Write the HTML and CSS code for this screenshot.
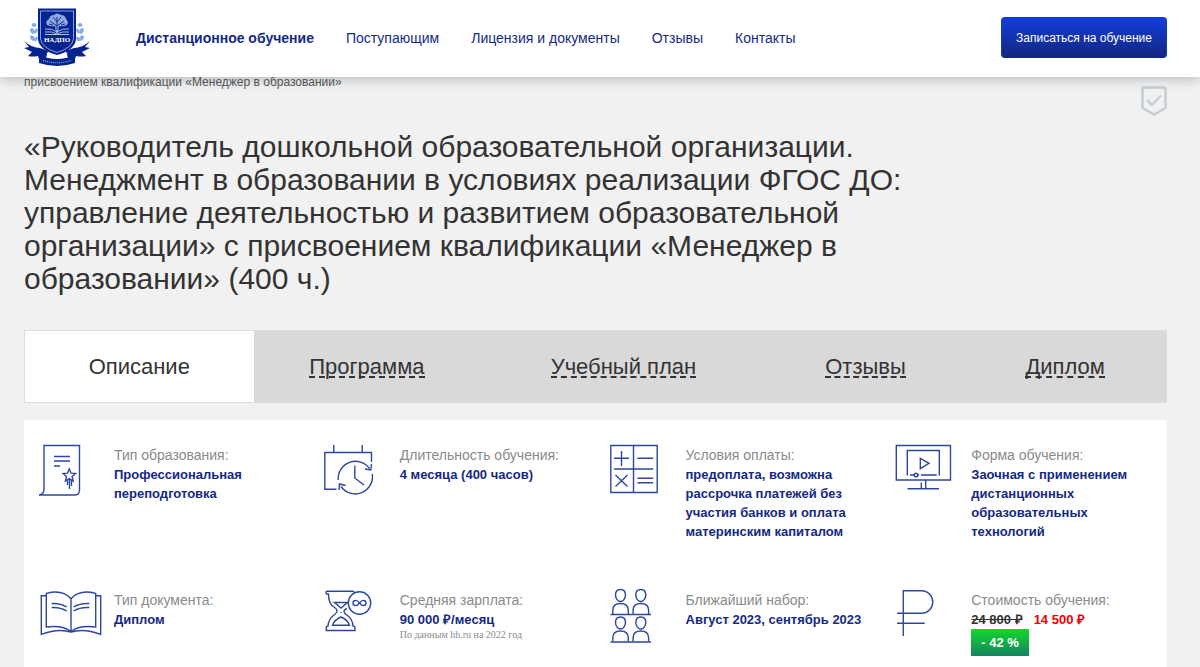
FILE: index.html
```html
<!DOCTYPE html>
<html lang="ru">
<head>
<meta charset="utf-8">
<meta name="viewport" content="width=device-width, initial-scale=1">
<title>НАДПО — Руководитель дошкольной образовательной организации</title>
<link rel="stylesheet" href="styles.css">
</head>
<body>
<header class="header">
  <a class="logo" href="#" aria-label="НАДПО">
    <svg width="68" height="60" viewBox="0 0 68 60">
      <g fill="#7fb0ea">
        <ellipse cx="11" cy="17" rx="2.4" ry="2"/><ellipse cx="9.500" cy="23" rx="2" ry="3" transform="rotate(-30 9.500 23)"/><ellipse cx="13" cy="23" rx="1.500" ry="2.600" transform="rotate(30 13 23)"/><ellipse cx="9.500" cy="30" rx="2" ry="3" transform="rotate(-35 9.500 30)"/><ellipse cx="13" cy="31" rx="1.500" ry="2.600" transform="rotate(30 13 31)"/>
        <ellipse cx="57" cy="17" rx="2.4" ry="2"/><ellipse cx="58.500" cy="23" rx="2" ry="3" transform="rotate(30 58.500 23)"/><ellipse cx="55" cy="23" rx="1.500" ry="2.600" transform="rotate(-30 55 23)"/><ellipse cx="58.500" cy="30" rx="2" ry="3" transform="rotate(35 58.500 30)"/><ellipse cx="55" cy="31" rx="1.500" ry="2.600" transform="rotate(-30 55 31)"/>
      </g>
      <path fill="#06248f" d="M1 33Q9 40 17 40L25 43L23 50L16 51L15 48Q9 49 5 48L9 44L1 40L6 39ZM67 33Q59 40 51 40L43 43L45 50L52 51L53 48Q59 49 63 48L59 44L67 40L62 39Z"/>
      <path fill="#06248f" d="M15 .5H53V31Q52 42 34 47Q16 42 15 31Z"/>
      <path fill="none" stroke="#a9bce8" stroke-width=".8" d="M17.500 3H50.500V31Q49 40 34 44.500Q19 40 17.500 31Z"/>
      <path fill="#8fa8e0" d="M24 17Q22 13 26 11Q27 7 31 7Q34 4 38 7Q42 7 43 11Q46 14 44 17Q40 19 36 18L35 25H33L32 18Q28 19 24 17Z"/>
      <path fill="none" stroke="#06248f" stroke-width=".9" d="M34 22V9M34 18L27 13M34 18L41 13M34 14L30 9M34 14L38 9M26 16L30 17M42 16L38 17"/>
      <path fill="none" stroke="#a9bce8" stroke-width="1" d="M22 21Q29 20 34 24Q39 20 46 21M22 24Q29 23 34 26Q39 23 46 24M22 26.500H46"/>
      <text class="logo-text" x="34" y="34" text-anchor="middle">НАДПО</text>
      <path fill="#06248f" d="M16 47Q34 55 52 47V55Q34 61 16 55Z"/>
      <path fill="none" stroke="#8fa8e0" stroke-width="1.200" stroke-dasharray="1 1" d="M20 52.500Q34 57 48 52.500"/>
      <path fill="#fff" d="M23.500 45L30 47L25 49Z"/><path fill="#fff" d="M44.500 45L38 47L43 49Z"/>
    </svg>
  </a>
  <nav class="nav">
    <a class="nav-link nav-current" href="#">Дистанционное обучение</a>
    <a class="nav-link" href="#">Поступающим</a>
    <a class="nav-link" href="#">Лицензия и документы</a>
    <a class="nav-link" href="#">Отзывы</a>
    <a class="nav-link" href="#">Контакты</a>
  </nav>
  <button class="enroll" type="button">Записаться на обучение</button>
</header>

<main class="main">
  <div class="intro">
    <div class="intro-text">
      <p class="crumb">присвоением квалификации «Менеджер в образовании»</p>
      <h1 class="title">«Руководитель дошкольной образовательной организации. Менеджмент в образовании в условиях реализации ФГОС ДО: управление деятельностью и развитием образовательной организации» с присвоением квалификации «Менеджер в образовании» (400 ч.)</h1>
    </div>
    <svg class="badge" width="26" height="30" viewBox="0 0 26 30" fill="none" stroke="#c5ced4" stroke-width="2.500" stroke-linejoin="round">
      <path d="M3 1.500H23Q24.500 1.500 24.500 3V22L13 28.500L1.500 22V3Q1.500 1.500 3 1.500Z"/>
      <path d="M6 14L11 19L20 9.500"/>
    </svg>
  </div>

  <nav class="tabs">
    <a class="tab tab-active" href="#"><span>Описание</span></a>
    <a class="tab" href="#"><span class="tab-label">Программа</span></a>
    <a class="tab" href="#"><span class="tab-label">Учебный план</span></a>
    <a class="tab" href="#"><span class="tab-label">Отзывы</span></a>
    <a class="tab" href="#"><span class="tab-label">Диплом</span></a>
  </nav>

  <section class="facts">
    <div class="fact">
      <svg class="icon" viewBox="0 0 66 56"><path d="M6 2.500H41.500V47Q41.500 52 37 52H1Q6 51 6 46Z M16 13.500H32M16 18H32M16 23H22M31.300 26L33.100 30.200L37.500 30.500L34.100 33.500L35.200 38L31.300 35.600L27.400 38L28.500 33.500L25.100 30.500L29.500 30.200ZM29.500 37V42M31.500 36V46M33.500 37V43"/></svg>
      <div class="fact-body"><p class="label">Тип образования:</p><p class="value">Профессиональная переподготовка</p></div>
    </div>
    <div class="fact">
      <svg class="icon" viewBox="0 0 66 56"><path d="M9.800 2V9.500H38.200V2M9.800 9.500H.8V46.300H12.500M38.200 9.500H47.500V19M30.800 22.500V35L40 42M14.200 37A17.300 17.300 0 0 1 45.500 25.500M48.300 31A17.300 17.300 0 0 1 17 43.500M41 26L46.800 27L47.500 21M15 47L15.500 41L21.500 42.500"/></svg>
      <div class="fact-body"><p class="label">Длительность обучения:</p><p class="value">4 месяца (400 часов)</p></div>
    </div>
    <div class="fact">
      <svg class="icon" viewBox="0 0 66 56"><path d="M.8 2.500H47.200V49.500H.8ZM23.500 2.500V49.500M4 26H43.200M4 15.300H19M11.500 8V23M27.500 15.300H43.200M5.500 32L17.500 43.500M17.500 32L5.500 43.500M27.500 35.300H43.200M27.500 39.700H43.200"/></svg>
      <div class="fact-body"><p class="label">Условия оплаты:</p><p class="value">предоплата, возможна рассрочка платежей без участия банков и оплата материнским капиталом</p></div>
    </div>
    <div class="fact">
      <svg class="icon" viewBox="0 0 66 56"><path d="M1.300 2.500H55.500V37H1.300ZM12.300 32.500V7.500H44.300V32.500M15 32H19M23 32H24M26 32H41.700M25.300 15.300L34 20.300L25.300 25.700ZM26.300 39.500V45.500M30.700 37V45.500M12.500 45.700H44"/><circle cx="21" cy="32" r="1.800"/></svg>
      <div class="fact-body"><p class="label">Форма обучения:</p><p class="value">Заочная с применением дистанционных образовательных технологий</p></div>
    </div>
    <div class="fact">
      <svg class="icon" viewBox="0 0 66 56"><path d="M8.300 7.700H3.300V46.300Q20 40 33 44Q46 40 62.700 46.300V7.700H57.700M33 10.700Q24 1 8.300 5.500V39Q25 37 33 43.500Q41 37 57.700 39V5.500Q42 1 33 10.700V43.500M13.700 15.500Q22 15 28.700 19M13.700 19.500Q22 19 28.700 23M51.300 15.500Q42 15 35.500 19M51.300 19.500Q42 19 35.500 23"/></svg>
      <div class="fact-body"><p class="label">Тип документа:</p><p class="value">Диплом</p></div>
    </div>
    <div class="fact">
      <svg class="icon" viewBox="0 0 66 56"><path d="M30.500 4.500L29 3.300H3.500Q1 3.500 2.500 6H4.500Q4.500 16 10 19Q16 23 10 27Q4.500 31 4 38Q2.200 38 2.200 40V42.500H31V40Q31 38 29 38Q28.500 31 23 27Q17 23 23 20.500M10.500 14.500H23.500L17 20ZM8.500 37.300Q10 32 17 29Q24 32 25.500 37.300ZM17 24V25"/><circle cx="35.500" cy="15" r="11.200"/><path d="M35.500 15Q33 12 31.500 12.500A2.500 2.500 0 0 0 31.500 17.500Q33 18 35.500 15Q38 12 39.500 12.500A2.500 2.500 0 0 1 39.500 17.500Q38 18 35.500 15Z"/></svg>
      <div class="fact-body"><p class="label">Средняя зарплата:</p><p class="value">90 000 ₽/месяц</p><p class="note">По данным hh.ru на 2022 год</p></div>
    </div>
    <div class="fact">
      <svg class="icon" viewBox="0 0 66 56"><defs><path id="person" d="M10.500 1.500C14 1.500 15.500 4 15.500 7C15.500 10.500 13 13.500 10.500 13.500C8 13.500 5.500 10.500 5.500 7C5.500 4 7 1.500 10.500 1.500ZM2.800 26V22Q3 15.500 10.500 15.500Q18 15.500 18.300 22V26"/></defs><use href="#person"/><use href="#person" x="20.300"/><use href="#person" y="27.500"/><use href="#person" x="20.300" y="27.500"/><path d="M.5 26.500H41M.5 54H41"/></svg>
      <div class="fact-body"><p class="label">Ближайший набор:</p><p class="value">Август 2023, сентябрь 2023</p></div>
    </div>
    <div class="fact">
      <svg class="icon" viewBox="0 0 66 56"><path d="M8.300 48V2.700H26.500A11.300 11.300 0 0 1 26.500 25.300H2M2 35.300H29.700"/></svg>
      <div class="fact-body"><p class="label">Стоимость обучения:</p><p class="value prices"><s class="old">24 800 ₽</s><span class="new">14 500 ₽</span></p><p class="discount">- 42 %</p></div>
    </div>
  </section>
</main>
</body>
</html>
```
FILE: styles.css
```css
* { box-sizing: border-box; }
body {
  margin: 0;
  background: #f1f1f1;
  color: #333;
  font-family: "Liberation Sans", Arial, sans-serif;
}
p, h1 { margin: 0; }
a { color: inherit; text-decoration: none; }

.header {
  position: relative;
  display: flex;
  align-items: center;
  min-height: 77px;
  padding: 0 33px 2px 23px;
  background: #fff;
  box-shadow: 0 1px 12px rgba(60, 80, 95, .4);
}
.logo { display: flex; margin-right: 45px; }
.logo-text { font: bold 7px "Liberation Serif", serif; fill: #fff; }
.nav { display: flex; flex: 1; gap: 32px; }
.nav-link { color: #142984; font-size: 14px; line-height: 20px; }
.nav-current { font-weight: bold; }
.enroll {
  height: 41px;
  padding: 0 14px;
  border: 1px solid #1238c8;
  border-bottom-color: #10257c;
  border-radius: 4px;
  background: linear-gradient(#123ddb, #13277f);
  color: #fff;
  font: 12px "Liberation Sans", Arial, sans-serif;
}

.main { padding: 0 33px 0 24px; }
.intro { display: flex; justify-content: space-between; align-items: flex-start; }
.intro-text { max-width: 900px; }
.crumb { font-size: 12px; line-height: 10px; color: #555; }
.title { margin-top: 43px; font-size: 30px; line-height: 33px; font-weight: normal; }
.badge { margin-top: 9px; }

.tabs {
  display: grid;
  grid-template-columns: 229fr 227fr 287fr 198fr 202fr;
  margin-top: 35px;
  border: 1px solid #dcdcdc;
  background: #d9d9d9;
}
.tab {
  display: flex;
  justify-content: center;
  align-items: center;
  height: 71px;
  font-size: 22px;
  line-height: 22px;
}
.tab-active { background: #fff; }
.tab-label {
  padding-top: 2px;
  border-bottom: 2px dashed #333;
  line-height: 18px;
}

.facts {
  display: grid;
  grid-template-columns: repeat(4, 1fr);
  row-gap: 47px;
  margin-top: 17px;
  padding: 23px 0 11px;
  background: #fff;
}
.fact { display: flex; gap: 10px; padding: 0 14px; }
.icon {
  flex: none;
  width: 66px;
  height: 56px;
  fill: none;
  stroke: #2e46a0;
  stroke-width: 1.4;
}
.fact-body { flex: 1; padding-top: 3px; }
.label { font-size: 14px; line-height: 19px; color: #8a8a8a; }
.value { font-size: 13px; line-height: 19px; font-weight: bold; color: #142984; }
.note { font: 10px/12px "Liberation Serif", serif; color: #8a8a8a; }
.prices { display: flex; gap: 11px; }
.old { color: #333; }
.new { color: #f00000; }
.discount {
  width: fit-content;
  padding: 0 10px;
  background: linear-gradient(#14d72a, #148462);
  color: #fff;
  font-size: 13px;
  line-height: 27px;
  font-weight: bold;
}
```
